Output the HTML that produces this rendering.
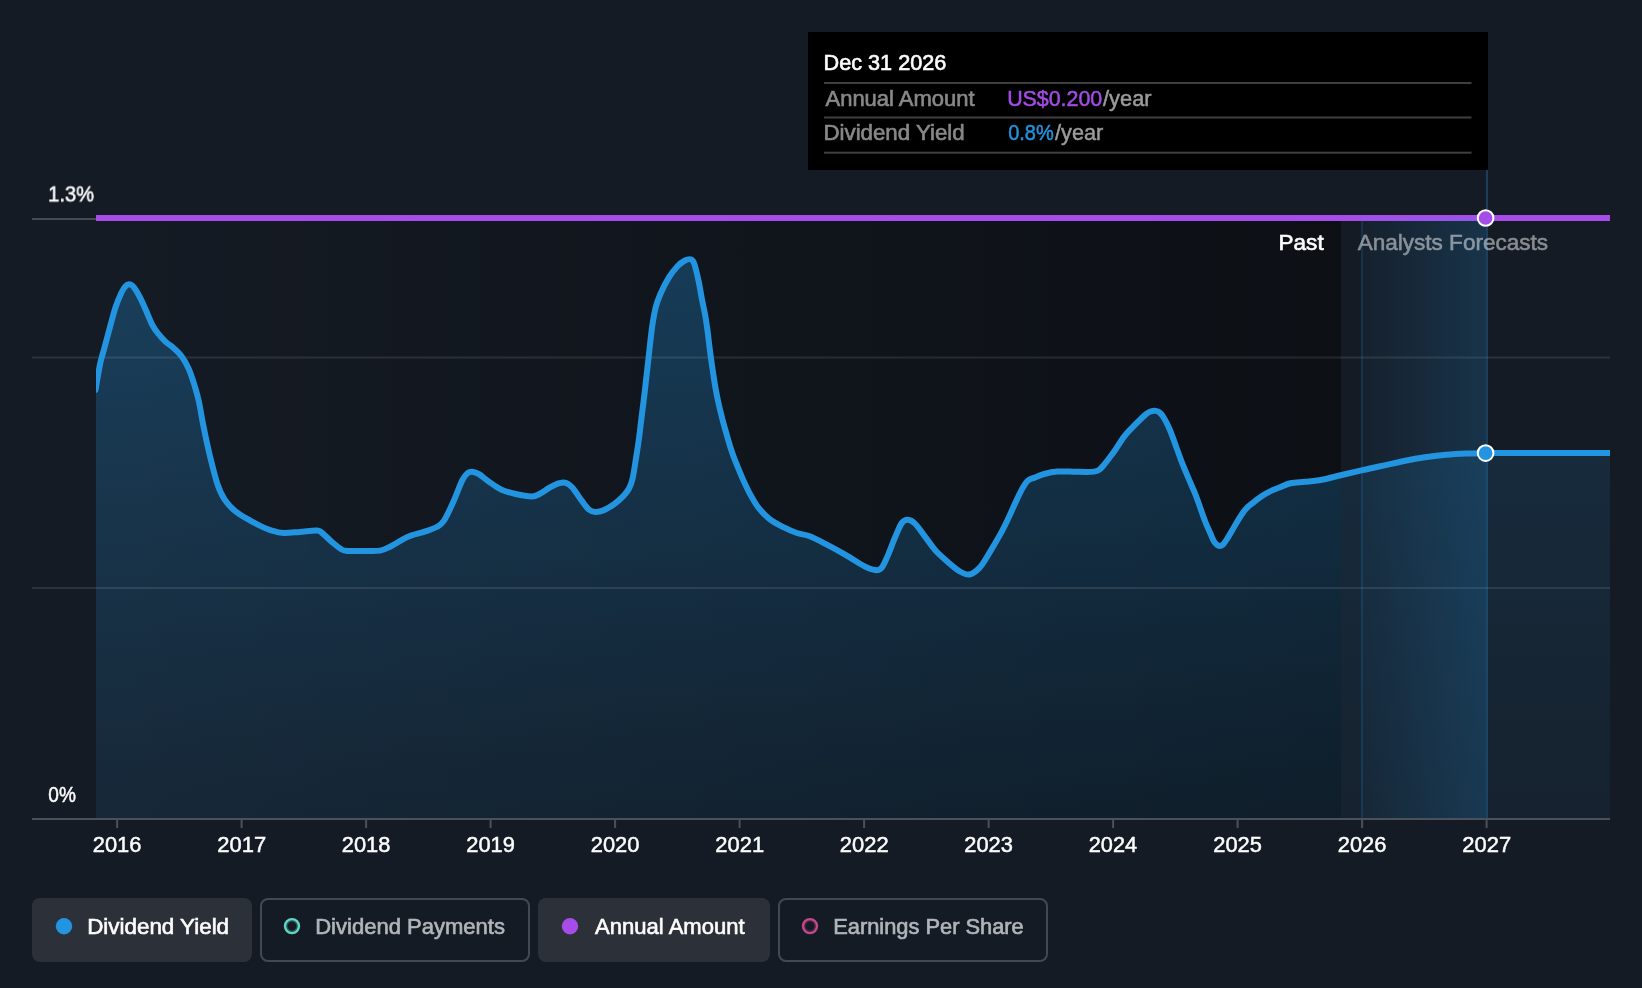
<!DOCTYPE html>
<html lang="en"><head><meta charset="utf-8"><title>Dividend Yield Chart</title>
<style>
html,body{margin:0;padding:0;background:#151b24;}
body{width:1642px;height:988px;overflow:hidden;}
svg{display:block;will-change:transform;}
text{font-family:"Liberation Sans",sans-serif;font-size:22px;stroke-width:0.5px;}
</style></head><body>
<svg width="1642" height="988" viewBox="0 0 1642 988">
<defs>
<linearGradient id="past" x1="0" y1="0" x2="1" y2="0"><stop offset="0" stop-color="#000" stop-opacity="0"/><stop offset="1" stop-color="#000" stop-opacity=".42"/></linearGradient>
<linearGradient id="area" gradientUnits="userSpaceOnUse" x1="0" y1="259" x2="0" y2="818"><stop offset="0" stop-color="#2394df" stop-opacity=".30"/><stop offset="1" stop-color="#2394df" stop-opacity=".10"/></linearGradient>
<linearGradient id="hl" x1="0" y1="0" x2="1" y2="0"><stop offset="0" stop-color="#2394df" stop-opacity=".05"/><stop offset="1" stop-color="#2394df" stop-opacity=".20"/></linearGradient>
<clipPath id="cpast"><rect x="96" y="200" width="1245" height="630"/></clipPath>
<clipPath id="cfc"><rect x="1341" y="200" width="269" height="630"/></clipPath>
<clipPath id="plot"><rect x="96" y="200" width="1514" height="630"/></clipPath>
</defs>
<rect width="1642" height="988" fill="#151b24"/>
<rect x="96" y="218" width="1245" height="600" fill="url(#past)"/>
<g clip-path="url(#cpast)"><path d="M95.5,390.0C96.3,385.6 98.7,370.5 100.2,363.5C101.7,356.5 102.8,354.0 104.4,347.9C106.1,341.8 108.2,333.5 110.1,326.6C112.0,319.8 113.8,312.5 115.7,306.8C117.6,301.1 119.8,296.1 121.4,292.7C123.0,289.3 124.2,287.7 125.5,286.3C126.8,284.9 128.0,284.4 129.2,284.3C130.4,284.2 131.4,284.9 132.5,285.8C133.6,286.7 134.3,287.7 135.6,289.8C136.9,291.9 138.6,294.5 140.5,298.3C142.4,302.1 144.9,308.0 146.9,312.5C148.9,317.0 150.6,321.7 152.5,325.2C154.4,328.7 155.9,330.9 158.2,333.7C160.4,336.5 163.7,340.0 166.0,342.2C168.3,344.4 169.6,344.5 172.2,346.8C174.8,349.1 178.7,352.3 181.4,356.0C184.2,359.7 186.4,363.6 188.7,368.8C191.0,374.0 193.2,381.3 195.0,387.0C196.8,392.7 197.8,396.3 199.2,403.0C200.6,409.7 201.9,418.5 203.7,427.4C205.5,436.3 207.8,447.2 210.1,456.6C212.4,466.0 215.0,476.8 217.4,484.0C219.8,491.2 221.6,495.0 224.7,499.6C227.8,504.2 231.4,508.0 235.7,511.5C240.0,515.0 245.1,517.7 250.3,520.6C255.5,523.5 261.5,526.8 266.7,528.8C271.9,530.8 275.9,532.3 281.4,532.8C286.9,533.3 293.8,532.3 299.6,531.9C305.4,531.5 312.4,530.5 316.1,530.6C319.8,530.7 318.9,530.5 321.6,532.5C324.3,534.5 329.1,539.7 332.5,542.5C335.9,545.3 339.3,548.1 341.7,549.5C344.1,550.9 343.5,550.7 347.1,550.9C350.8,551.1 358.1,550.9 363.6,550.9C369.1,550.9 375.4,551.4 380.0,550.6C384.6,549.8 386.4,548.5 391.0,546.2C395.6,543.9 401.9,539.4 407.4,537.0C412.9,534.6 419.0,533.6 423.9,531.9C428.8,530.2 433.3,528.9 436.7,527.0C440.1,525.1 441.3,524.7 444.0,520.6C446.7,516.5 450.1,509.0 453.1,502.3C456.1,495.6 459.8,485.3 462.2,480.4C464.6,475.5 466.0,474.5 467.7,473.1C469.4,471.7 470.4,471.6 472.3,471.8C474.2,472.0 476.3,472.6 479.0,474.2C481.7,475.8 484.6,478.7 488.3,481.2C492.0,483.7 496.4,487.3 501.0,489.4C505.6,491.5 510.5,492.8 515.7,494.0C520.9,495.2 528.2,496.4 532.1,496.4C536.0,496.4 536.4,495.5 539.4,494.0C542.4,492.5 547.0,489.0 550.4,487.2C553.8,485.4 556.9,483.9 559.5,483.2C562.1,482.5 563.8,482.2 565.9,482.9C568.0,483.6 569.7,484.7 572.3,487.6C574.9,490.5 578.8,496.8 581.5,500.4C584.2,504.0 586.5,507.6 588.8,509.5C591.1,511.4 592.8,511.8 595.2,511.9C597.6,512.0 600.2,511.7 603.4,510.4C606.6,509.1 610.9,506.4 614.3,504.0C617.6,501.6 621.0,498.4 623.5,495.8C626.0,493.2 627.5,491.4 629.0,488.5C630.5,485.6 631.4,483.8 632.6,478.5C633.8,473.2 635.2,463.2 636.3,456.5C637.4,449.8 638.2,444.1 639.0,438.3C639.8,432.6 640.0,429.9 641.0,422.0C642.0,414.1 643.5,401.8 644.8,391.2C646.0,380.6 647.3,369.0 648.5,358.3C649.7,347.6 650.9,335.7 652.1,327.2C653.3,318.7 654.4,312.6 655.8,307.1C657.2,301.6 658.2,299.2 660.3,294.3C662.4,289.4 665.7,282.6 668.6,277.9C671.5,273.2 675.0,268.9 677.7,266.0C680.4,263.1 682.9,261.6 685.0,260.5C687.1,259.4 689.0,258.8 690.5,259.3C692.0,259.8 692.7,259.6 694.1,263.3C695.5,267.0 697.4,275.4 698.7,281.5C700.0,287.6 701.0,294.4 702.1,300.0C703.2,305.6 704.3,310.1 705.2,315.2C706.1,320.3 706.8,325.3 707.5,330.4C708.2,335.4 708.7,340.9 709.3,345.5C709.9,350.1 710.3,353.1 710.9,357.7C711.5,362.3 712.3,367.8 713.1,372.9C713.9,377.9 714.6,382.9 715.5,388.0C716.4,393.1 717.4,398.1 718.5,403.2C719.6,408.3 720.9,413.3 722.2,418.4C723.5,423.5 724.9,428.3 726.4,433.6C727.9,438.9 729.8,445.4 731.3,450.0C732.8,454.6 733.5,456.5 735.3,461.0C737.1,465.5 739.6,471.8 742.0,477.2C744.4,482.6 746.9,488.3 749.7,493.4C752.5,498.5 755.2,503.6 758.6,507.9C762.0,512.2 765.8,516.0 770.0,519.3C774.2,522.5 779.4,525.1 783.9,527.4C788.4,529.7 792.6,531.5 796.9,533.0C801.2,534.5 805.0,534.4 809.8,536.3C814.6,538.1 819.9,541.0 825.9,544.1C831.9,547.2 839.6,551.4 846.0,555.1C852.4,558.8 859.3,563.6 864.2,566.1C869.1,568.6 872.3,569.8 875.2,570.1C878.1,570.4 879.5,570.4 881.6,567.9C883.7,565.4 885.7,560.3 888.0,555.1C890.3,549.9 893.0,542.1 895.3,536.8C897.6,531.5 899.6,525.9 901.7,523.1C903.8,520.3 905.8,519.6 908.1,519.8C910.4,519.9 912.7,521.3 915.4,524.0C918.1,526.7 921.1,531.5 924.5,535.9C927.9,540.3 931.5,546.1 935.5,550.5C939.5,554.9 944.3,558.9 948.3,562.4C952.3,565.9 955.8,569.2 959.3,571.2C962.8,573.2 965.9,575.0 969.3,574.5C972.6,574.0 976.1,571.4 979.4,567.9C982.7,564.4 985.6,559.1 989.1,553.4C992.6,547.7 997.2,539.8 1000.5,533.9C1003.8,528.0 1005.9,523.4 1008.6,517.7C1011.3,512.0 1014.3,505.0 1016.7,499.9C1019.1,494.8 1021.3,490.2 1023.2,487.0C1025.1,483.8 1026.1,482.1 1028.0,480.5C1029.9,478.9 1031.8,478.7 1034.5,477.6C1037.2,476.5 1040.4,475.0 1044.2,474.0C1048.0,473.0 1052.3,472.0 1057.2,471.6C1062.1,471.2 1068.6,471.6 1073.4,471.7C1078.2,471.8 1082.9,472.0 1086.3,472.0C1089.7,472.0 1092.0,471.9 1094.0,471.6C1096.0,471.3 1097.1,471.1 1098.6,470.2C1100.1,469.3 1101.3,468.0 1103.0,466.0C1104.7,464.0 1107.0,461.0 1109.0,458.4C1111.0,455.8 1112.5,453.9 1115.0,450.3C1117.5,446.7 1120.8,440.9 1124.1,436.6C1127.4,432.3 1131.4,428.4 1135.1,424.7C1138.8,421.0 1143.4,416.4 1146.1,414.2C1148.8,412.0 1149.5,411.9 1151.1,411.3C1152.7,410.8 1154.3,410.7 1155.7,410.9C1157.1,411.1 1158.4,411.5 1159.7,412.6C1161.0,413.7 1162.4,415.4 1163.8,417.7C1165.2,420.0 1166.9,423.2 1168.3,426.3C1169.7,429.4 1171.1,432.9 1172.4,436.4C1173.8,439.9 1175.1,443.8 1176.4,447.5C1177.8,451.2 1179.2,455.1 1180.5,458.7C1181.8,462.2 1183.0,465.3 1184.5,468.8C1186.0,472.3 1187.6,476.2 1189.2,479.9C1190.8,483.6 1192.6,487.7 1194.0,491.0C1195.4,494.3 1195.7,494.9 1197.5,499.9C1199.3,504.9 1202.9,515.5 1205.0,521.0C1207.1,526.5 1208.6,529.4 1210.1,532.8C1211.6,536.2 1212.7,539.2 1213.9,541.2C1215.1,543.2 1216.3,544.3 1217.3,545.1C1218.2,545.9 1218.6,546.1 1219.6,546.0C1220.6,545.9 1221.9,545.6 1223.2,544.3C1224.5,543.0 1225.8,540.8 1227.4,538.3C1229.0,535.8 1230.8,532.5 1232.8,529.2C1234.8,525.9 1237.1,521.6 1239.2,518.3C1241.3,515.0 1243.3,511.8 1245.6,509.2C1247.9,506.6 1250.2,505.0 1252.9,502.8C1255.6,500.6 1259.0,498.0 1262.0,496.0C1265.0,494.0 1268.1,492.3 1271.1,490.9C1274.1,489.4 1276.8,488.6 1280.0,487.3C1283.2,486.0 1286.2,484.1 1290.4,483.2C1294.6,482.3 1299.9,482.3 1305.0,481.8C1310.1,481.3 1314.7,481.1 1320.8,480.0C1326.9,478.9 1334.8,476.6 1341.7,475.0C1348.7,473.4 1355.6,471.8 1362.5,470.2C1369.4,468.6 1376.4,467.1 1383.3,465.6C1390.2,464.1 1397.1,462.4 1404.1,461.0C1411.0,459.6 1418.0,458.3 1425.0,457.3C1432.0,456.3 1438.9,455.4 1445.8,454.8C1452.7,454.2 1460.0,453.8 1466.6,453.5C1473.2,453.2 1482.3,453.2 1485.4,453.1L1614,453.1L1614,818L95.5,818Z" fill="url(#area)"/></g>
<g clip-path="url(#cfc)" opacity=".56"><path d="M95.5,390.0C96.3,385.6 98.7,370.5 100.2,363.5C101.7,356.5 102.8,354.0 104.4,347.9C106.1,341.8 108.2,333.5 110.1,326.6C112.0,319.8 113.8,312.5 115.7,306.8C117.6,301.1 119.8,296.1 121.4,292.7C123.0,289.3 124.2,287.7 125.5,286.3C126.8,284.9 128.0,284.4 129.2,284.3C130.4,284.2 131.4,284.9 132.5,285.8C133.6,286.7 134.3,287.7 135.6,289.8C136.9,291.9 138.6,294.5 140.5,298.3C142.4,302.1 144.9,308.0 146.9,312.5C148.9,317.0 150.6,321.7 152.5,325.2C154.4,328.7 155.9,330.9 158.2,333.7C160.4,336.5 163.7,340.0 166.0,342.2C168.3,344.4 169.6,344.5 172.2,346.8C174.8,349.1 178.7,352.3 181.4,356.0C184.2,359.7 186.4,363.6 188.7,368.8C191.0,374.0 193.2,381.3 195.0,387.0C196.8,392.7 197.8,396.3 199.2,403.0C200.6,409.7 201.9,418.5 203.7,427.4C205.5,436.3 207.8,447.2 210.1,456.6C212.4,466.0 215.0,476.8 217.4,484.0C219.8,491.2 221.6,495.0 224.7,499.6C227.8,504.2 231.4,508.0 235.7,511.5C240.0,515.0 245.1,517.7 250.3,520.6C255.5,523.5 261.5,526.8 266.7,528.8C271.9,530.8 275.9,532.3 281.4,532.8C286.9,533.3 293.8,532.3 299.6,531.9C305.4,531.5 312.4,530.5 316.1,530.6C319.8,530.7 318.9,530.5 321.6,532.5C324.3,534.5 329.1,539.7 332.5,542.5C335.9,545.3 339.3,548.1 341.7,549.5C344.1,550.9 343.5,550.7 347.1,550.9C350.8,551.1 358.1,550.9 363.6,550.9C369.1,550.9 375.4,551.4 380.0,550.6C384.6,549.8 386.4,548.5 391.0,546.2C395.6,543.9 401.9,539.4 407.4,537.0C412.9,534.6 419.0,533.6 423.9,531.9C428.8,530.2 433.3,528.9 436.7,527.0C440.1,525.1 441.3,524.7 444.0,520.6C446.7,516.5 450.1,509.0 453.1,502.3C456.1,495.6 459.8,485.3 462.2,480.4C464.6,475.5 466.0,474.5 467.7,473.1C469.4,471.7 470.4,471.6 472.3,471.8C474.2,472.0 476.3,472.6 479.0,474.2C481.7,475.8 484.6,478.7 488.3,481.2C492.0,483.7 496.4,487.3 501.0,489.4C505.6,491.5 510.5,492.8 515.7,494.0C520.9,495.2 528.2,496.4 532.1,496.4C536.0,496.4 536.4,495.5 539.4,494.0C542.4,492.5 547.0,489.0 550.4,487.2C553.8,485.4 556.9,483.9 559.5,483.2C562.1,482.5 563.8,482.2 565.9,482.9C568.0,483.6 569.7,484.7 572.3,487.6C574.9,490.5 578.8,496.8 581.5,500.4C584.2,504.0 586.5,507.6 588.8,509.5C591.1,511.4 592.8,511.8 595.2,511.9C597.6,512.0 600.2,511.7 603.4,510.4C606.6,509.1 610.9,506.4 614.3,504.0C617.6,501.6 621.0,498.4 623.5,495.8C626.0,493.2 627.5,491.4 629.0,488.5C630.5,485.6 631.4,483.8 632.6,478.5C633.8,473.2 635.2,463.2 636.3,456.5C637.4,449.8 638.2,444.1 639.0,438.3C639.8,432.6 640.0,429.9 641.0,422.0C642.0,414.1 643.5,401.8 644.8,391.2C646.0,380.6 647.3,369.0 648.5,358.3C649.7,347.6 650.9,335.7 652.1,327.2C653.3,318.7 654.4,312.6 655.8,307.1C657.2,301.6 658.2,299.2 660.3,294.3C662.4,289.4 665.7,282.6 668.6,277.9C671.5,273.2 675.0,268.9 677.7,266.0C680.4,263.1 682.9,261.6 685.0,260.5C687.1,259.4 689.0,258.8 690.5,259.3C692.0,259.8 692.7,259.6 694.1,263.3C695.5,267.0 697.4,275.4 698.7,281.5C700.0,287.6 701.0,294.4 702.1,300.0C703.2,305.6 704.3,310.1 705.2,315.2C706.1,320.3 706.8,325.3 707.5,330.4C708.2,335.4 708.7,340.9 709.3,345.5C709.9,350.1 710.3,353.1 710.9,357.7C711.5,362.3 712.3,367.8 713.1,372.9C713.9,377.9 714.6,382.9 715.5,388.0C716.4,393.1 717.4,398.1 718.5,403.2C719.6,408.3 720.9,413.3 722.2,418.4C723.5,423.5 724.9,428.3 726.4,433.6C727.9,438.9 729.8,445.4 731.3,450.0C732.8,454.6 733.5,456.5 735.3,461.0C737.1,465.5 739.6,471.8 742.0,477.2C744.4,482.6 746.9,488.3 749.7,493.4C752.5,498.5 755.2,503.6 758.6,507.9C762.0,512.2 765.8,516.0 770.0,519.3C774.2,522.5 779.4,525.1 783.9,527.4C788.4,529.7 792.6,531.5 796.9,533.0C801.2,534.5 805.0,534.4 809.8,536.3C814.6,538.1 819.9,541.0 825.9,544.1C831.9,547.2 839.6,551.4 846.0,555.1C852.4,558.8 859.3,563.6 864.2,566.1C869.1,568.6 872.3,569.8 875.2,570.1C878.1,570.4 879.5,570.4 881.6,567.9C883.7,565.4 885.7,560.3 888.0,555.1C890.3,549.9 893.0,542.1 895.3,536.8C897.6,531.5 899.6,525.9 901.7,523.1C903.8,520.3 905.8,519.6 908.1,519.8C910.4,519.9 912.7,521.3 915.4,524.0C918.1,526.7 921.1,531.5 924.5,535.9C927.9,540.3 931.5,546.1 935.5,550.5C939.5,554.9 944.3,558.9 948.3,562.4C952.3,565.9 955.8,569.2 959.3,571.2C962.8,573.2 965.9,575.0 969.3,574.5C972.6,574.0 976.1,571.4 979.4,567.9C982.7,564.4 985.6,559.1 989.1,553.4C992.6,547.7 997.2,539.8 1000.5,533.9C1003.8,528.0 1005.9,523.4 1008.6,517.7C1011.3,512.0 1014.3,505.0 1016.7,499.9C1019.1,494.8 1021.3,490.2 1023.2,487.0C1025.1,483.8 1026.1,482.1 1028.0,480.5C1029.9,478.9 1031.8,478.7 1034.5,477.6C1037.2,476.5 1040.4,475.0 1044.2,474.0C1048.0,473.0 1052.3,472.0 1057.2,471.6C1062.1,471.2 1068.6,471.6 1073.4,471.7C1078.2,471.8 1082.9,472.0 1086.3,472.0C1089.7,472.0 1092.0,471.9 1094.0,471.6C1096.0,471.3 1097.1,471.1 1098.6,470.2C1100.1,469.3 1101.3,468.0 1103.0,466.0C1104.7,464.0 1107.0,461.0 1109.0,458.4C1111.0,455.8 1112.5,453.9 1115.0,450.3C1117.5,446.7 1120.8,440.9 1124.1,436.6C1127.4,432.3 1131.4,428.4 1135.1,424.7C1138.8,421.0 1143.4,416.4 1146.1,414.2C1148.8,412.0 1149.5,411.9 1151.1,411.3C1152.7,410.8 1154.3,410.7 1155.7,410.9C1157.1,411.1 1158.4,411.5 1159.7,412.6C1161.0,413.7 1162.4,415.4 1163.8,417.7C1165.2,420.0 1166.9,423.2 1168.3,426.3C1169.7,429.4 1171.1,432.9 1172.4,436.4C1173.8,439.9 1175.1,443.8 1176.4,447.5C1177.8,451.2 1179.2,455.1 1180.5,458.7C1181.8,462.2 1183.0,465.3 1184.5,468.8C1186.0,472.3 1187.6,476.2 1189.2,479.9C1190.8,483.6 1192.6,487.7 1194.0,491.0C1195.4,494.3 1195.7,494.9 1197.5,499.9C1199.3,504.9 1202.9,515.5 1205.0,521.0C1207.1,526.5 1208.6,529.4 1210.1,532.8C1211.6,536.2 1212.7,539.2 1213.9,541.2C1215.1,543.2 1216.3,544.3 1217.3,545.1C1218.2,545.9 1218.6,546.1 1219.6,546.0C1220.6,545.9 1221.9,545.6 1223.2,544.3C1224.5,543.0 1225.8,540.8 1227.4,538.3C1229.0,535.8 1230.8,532.5 1232.8,529.2C1234.8,525.9 1237.1,521.6 1239.2,518.3C1241.3,515.0 1243.3,511.8 1245.6,509.2C1247.9,506.6 1250.2,505.0 1252.9,502.8C1255.6,500.6 1259.0,498.0 1262.0,496.0C1265.0,494.0 1268.1,492.3 1271.1,490.9C1274.1,489.4 1276.8,488.6 1280.0,487.3C1283.2,486.0 1286.2,484.1 1290.4,483.2C1294.6,482.3 1299.9,482.3 1305.0,481.8C1310.1,481.3 1314.7,481.1 1320.8,480.0C1326.9,478.9 1334.8,476.6 1341.7,475.0C1348.7,473.4 1355.6,471.8 1362.5,470.2C1369.4,468.6 1376.4,467.1 1383.3,465.6C1390.2,464.1 1397.1,462.4 1404.1,461.0C1411.0,459.6 1418.0,458.3 1425.0,457.3C1432.0,456.3 1438.9,455.4 1445.8,454.8C1452.7,454.2 1460.0,453.8 1466.6,453.5C1473.2,453.2 1482.3,453.2 1485.4,453.1L1614,453.1L1614,818L95.5,818Z" fill="url(#area)"/></g>
<g fill="#fff"><rect x="32" y="218" width="70" height="2" fill-opacity=".21"/><rect x="32" y="356.5" width="1578" height="2" fill-opacity=".1"/><rect x="32" y="587" width="1578" height="2" fill-opacity=".1"/></g>
<g clip-path="url(#plot)">
<path d="M95.5,390.0C96.3,385.6 98.7,370.5 100.2,363.5C101.7,356.5 102.8,354.0 104.4,347.9C106.1,341.8 108.2,333.5 110.1,326.6C112.0,319.8 113.8,312.5 115.7,306.8C117.6,301.1 119.8,296.1 121.4,292.7C123.0,289.3 124.2,287.7 125.5,286.3C126.8,284.9 128.0,284.4 129.2,284.3C130.4,284.2 131.4,284.9 132.5,285.8C133.6,286.7 134.3,287.7 135.6,289.8C136.9,291.9 138.6,294.5 140.5,298.3C142.4,302.1 144.9,308.0 146.9,312.5C148.9,317.0 150.6,321.7 152.5,325.2C154.4,328.7 155.9,330.9 158.2,333.7C160.4,336.5 163.7,340.0 166.0,342.2C168.3,344.4 169.6,344.5 172.2,346.8C174.8,349.1 178.7,352.3 181.4,356.0C184.2,359.7 186.4,363.6 188.7,368.8C191.0,374.0 193.2,381.3 195.0,387.0C196.8,392.7 197.8,396.3 199.2,403.0C200.6,409.7 201.9,418.5 203.7,427.4C205.5,436.3 207.8,447.2 210.1,456.6C212.4,466.0 215.0,476.8 217.4,484.0C219.8,491.2 221.6,495.0 224.7,499.6C227.8,504.2 231.4,508.0 235.7,511.5C240.0,515.0 245.1,517.7 250.3,520.6C255.5,523.5 261.5,526.8 266.7,528.8C271.9,530.8 275.9,532.3 281.4,532.8C286.9,533.3 293.8,532.3 299.6,531.9C305.4,531.5 312.4,530.5 316.1,530.6C319.8,530.7 318.9,530.5 321.6,532.5C324.3,534.5 329.1,539.7 332.5,542.5C335.9,545.3 339.3,548.1 341.7,549.5C344.1,550.9 343.5,550.7 347.1,550.9C350.8,551.1 358.1,550.9 363.6,550.9C369.1,550.9 375.4,551.4 380.0,550.6C384.6,549.8 386.4,548.5 391.0,546.2C395.6,543.9 401.9,539.4 407.4,537.0C412.9,534.6 419.0,533.6 423.9,531.9C428.8,530.2 433.3,528.9 436.7,527.0C440.1,525.1 441.3,524.7 444.0,520.6C446.7,516.5 450.1,509.0 453.1,502.3C456.1,495.6 459.8,485.3 462.2,480.4C464.6,475.5 466.0,474.5 467.7,473.1C469.4,471.7 470.4,471.6 472.3,471.8C474.2,472.0 476.3,472.6 479.0,474.2C481.7,475.8 484.6,478.7 488.3,481.2C492.0,483.7 496.4,487.3 501.0,489.4C505.6,491.5 510.5,492.8 515.7,494.0C520.9,495.2 528.2,496.4 532.1,496.4C536.0,496.4 536.4,495.5 539.4,494.0C542.4,492.5 547.0,489.0 550.4,487.2C553.8,485.4 556.9,483.9 559.5,483.2C562.1,482.5 563.8,482.2 565.9,482.9C568.0,483.6 569.7,484.7 572.3,487.6C574.9,490.5 578.8,496.8 581.5,500.4C584.2,504.0 586.5,507.6 588.8,509.5C591.1,511.4 592.8,511.8 595.2,511.9C597.6,512.0 600.2,511.7 603.4,510.4C606.6,509.1 610.9,506.4 614.3,504.0C617.6,501.6 621.0,498.4 623.5,495.8C626.0,493.2 627.5,491.4 629.0,488.5C630.5,485.6 631.4,483.8 632.6,478.5C633.8,473.2 635.2,463.2 636.3,456.5C637.4,449.8 638.2,444.1 639.0,438.3C639.8,432.6 640.0,429.9 641.0,422.0C642.0,414.1 643.5,401.8 644.8,391.2C646.0,380.6 647.3,369.0 648.5,358.3C649.7,347.6 650.9,335.7 652.1,327.2C653.3,318.7 654.4,312.6 655.8,307.1C657.2,301.6 658.2,299.2 660.3,294.3C662.4,289.4 665.7,282.6 668.6,277.9C671.5,273.2 675.0,268.9 677.7,266.0C680.4,263.1 682.9,261.6 685.0,260.5C687.1,259.4 689.0,258.8 690.5,259.3C692.0,259.8 692.7,259.6 694.1,263.3C695.5,267.0 697.4,275.4 698.7,281.5C700.0,287.6 701.0,294.4 702.1,300.0C703.2,305.6 704.3,310.1 705.2,315.2C706.1,320.3 706.8,325.3 707.5,330.4C708.2,335.4 708.7,340.9 709.3,345.5C709.9,350.1 710.3,353.1 710.9,357.7C711.5,362.3 712.3,367.8 713.1,372.9C713.9,377.9 714.6,382.9 715.5,388.0C716.4,393.1 717.4,398.1 718.5,403.2C719.6,408.3 720.9,413.3 722.2,418.4C723.5,423.5 724.9,428.3 726.4,433.6C727.9,438.9 729.8,445.4 731.3,450.0C732.8,454.6 733.5,456.5 735.3,461.0C737.1,465.5 739.6,471.8 742.0,477.2C744.4,482.6 746.9,488.3 749.7,493.4C752.5,498.5 755.2,503.6 758.6,507.9C762.0,512.2 765.8,516.0 770.0,519.3C774.2,522.5 779.4,525.1 783.9,527.4C788.4,529.7 792.6,531.5 796.9,533.0C801.2,534.5 805.0,534.4 809.8,536.3C814.6,538.1 819.9,541.0 825.9,544.1C831.9,547.2 839.6,551.4 846.0,555.1C852.4,558.8 859.3,563.6 864.2,566.1C869.1,568.6 872.3,569.8 875.2,570.1C878.1,570.4 879.5,570.4 881.6,567.9C883.7,565.4 885.7,560.3 888.0,555.1C890.3,549.9 893.0,542.1 895.3,536.8C897.6,531.5 899.6,525.9 901.7,523.1C903.8,520.3 905.8,519.6 908.1,519.8C910.4,519.9 912.7,521.3 915.4,524.0C918.1,526.7 921.1,531.5 924.5,535.9C927.9,540.3 931.5,546.1 935.5,550.5C939.5,554.9 944.3,558.9 948.3,562.4C952.3,565.9 955.8,569.2 959.3,571.2C962.8,573.2 965.9,575.0 969.3,574.5C972.6,574.0 976.1,571.4 979.4,567.9C982.7,564.4 985.6,559.1 989.1,553.4C992.6,547.7 997.2,539.8 1000.5,533.9C1003.8,528.0 1005.9,523.4 1008.6,517.7C1011.3,512.0 1014.3,505.0 1016.7,499.9C1019.1,494.8 1021.3,490.2 1023.2,487.0C1025.1,483.8 1026.1,482.1 1028.0,480.5C1029.9,478.9 1031.8,478.7 1034.5,477.6C1037.2,476.5 1040.4,475.0 1044.2,474.0C1048.0,473.0 1052.3,472.0 1057.2,471.6C1062.1,471.2 1068.6,471.6 1073.4,471.7C1078.2,471.8 1082.9,472.0 1086.3,472.0C1089.7,472.0 1092.0,471.9 1094.0,471.6C1096.0,471.3 1097.1,471.1 1098.6,470.2C1100.1,469.3 1101.3,468.0 1103.0,466.0C1104.7,464.0 1107.0,461.0 1109.0,458.4C1111.0,455.8 1112.5,453.9 1115.0,450.3C1117.5,446.7 1120.8,440.9 1124.1,436.6C1127.4,432.3 1131.4,428.4 1135.1,424.7C1138.8,421.0 1143.4,416.4 1146.1,414.2C1148.8,412.0 1149.5,411.9 1151.1,411.3C1152.7,410.8 1154.3,410.7 1155.7,410.9C1157.1,411.1 1158.4,411.5 1159.7,412.6C1161.0,413.7 1162.4,415.4 1163.8,417.7C1165.2,420.0 1166.9,423.2 1168.3,426.3C1169.7,429.4 1171.1,432.9 1172.4,436.4C1173.8,439.9 1175.1,443.8 1176.4,447.5C1177.8,451.2 1179.2,455.1 1180.5,458.7C1181.8,462.2 1183.0,465.3 1184.5,468.8C1186.0,472.3 1187.6,476.2 1189.2,479.9C1190.8,483.6 1192.6,487.7 1194.0,491.0C1195.4,494.3 1195.7,494.9 1197.5,499.9C1199.3,504.9 1202.9,515.5 1205.0,521.0C1207.1,526.5 1208.6,529.4 1210.1,532.8C1211.6,536.2 1212.7,539.2 1213.9,541.2C1215.1,543.2 1216.3,544.3 1217.3,545.1C1218.2,545.9 1218.6,546.1 1219.6,546.0C1220.6,545.9 1221.9,545.6 1223.2,544.3C1224.5,543.0 1225.8,540.8 1227.4,538.3C1229.0,535.8 1230.8,532.5 1232.8,529.2C1234.8,525.9 1237.1,521.6 1239.2,518.3C1241.3,515.0 1243.3,511.8 1245.6,509.2C1247.9,506.6 1250.2,505.0 1252.9,502.8C1255.6,500.6 1259.0,498.0 1262.0,496.0C1265.0,494.0 1268.1,492.3 1271.1,490.9C1274.1,489.4 1276.8,488.6 1280.0,487.3C1283.2,486.0 1286.2,484.1 1290.4,483.2C1294.6,482.3 1299.9,482.3 1305.0,481.8C1310.1,481.3 1314.7,481.1 1320.8,480.0C1326.9,478.9 1334.8,476.6 1341.7,475.0C1348.7,473.4 1355.6,471.8 1362.5,470.2C1369.4,468.6 1376.4,467.1 1383.3,465.6C1390.2,464.1 1397.1,462.4 1404.1,461.0C1411.0,459.6 1418.0,458.3 1425.0,457.3C1432.0,456.3 1438.9,455.4 1445.8,454.8C1452.7,454.2 1460.0,453.8 1466.6,453.5C1473.2,453.2 1482.3,453.2 1485.4,453.1L1614,453.1" fill="none" stroke="#2394df" stroke-width="6" stroke-linejoin="round" stroke-linecap="round"/>
</g>
<line x1="96" y1="218" x2="1610" y2="218" stroke="#a64de9" stroke-width="6"/>
<rect x="1363" y="218" width="123" height="600" fill="url(#hl)"/>
<rect x="1361" y="218" width="2" height="600" fill="#2394df" fill-opacity=".2"/><rect x="1486" y="170" width="2" height="648" fill="#2394df" fill-opacity=".3"/>
<g fill="#4b515b"><rect x="32" y="818" width="1578" height="2"/><rect x="116.1" y="819" width="2" height="9"/><rect x="240.6" y="819" width="2" height="9"/><rect x="365.1" y="819" width="2" height="9"/><rect x="489.6" y="819" width="2" height="9"/><rect x="614.1" y="819" width="2" height="9"/><rect x="738.6" y="819" width="2" height="9"/><rect x="863.1" y="819" width="2" height="9"/><rect x="987.6" y="819" width="2" height="9"/><rect x="1112.1" y="819" width="2" height="9"/><rect x="1236.6" y="819" width="2" height="9"/><rect x="1361.1" y="819" width="2" height="9"/><rect x="1485.6" y="819" width="2" height="9"/></g>
<circle cx="1485.6" cy="218" r="7.85" fill="#a64de9" stroke="#fff" stroke-width="2"/>
<circle cx="1485.6" cy="453.1" r="7.85" fill="#2394df" stroke="#fff" stroke-width="2"/>
<!-- tooltip -->
<rect x="808" y="32" width="680" height="138" fill="#000"/>
<g fill="#3f3f3f"><rect x="824" y="82" width="647.5" height="2"/><rect x="824" y="116.5" width="647.5" height="2"/><rect x="824" y="151.7" width="647.5" height="2"/></g>
<!-- legend -->
<rect x="32" y="898" width="220" height="64" rx="8" fill="#2c3039"/>
<circle cx="64" cy="926.2" r="8.2" fill="#2394df"/>
<rect x="261" y="899" width="268" height="62" rx="7" fill="none" stroke="#434953" stroke-width="2"/>
<circle cx="292" cy="926.1" r="7" fill="none" stroke="#62d6c6" stroke-width="2.4"/><circle cx="292" cy="926.1" r="5.2" fill="none" stroke="#62d6c6" stroke-opacity=".3" stroke-width="1.6"/>
<rect x="538" y="898" width="232" height="64" rx="8" fill="#2c3039"/>
<circle cx="570" cy="926.2" r="8.2" fill="#a64de9"/>
<rect x="779" y="899" width="268" height="62" rx="7" fill="none" stroke="#434953" stroke-width="2"/>
<circle cx="810" cy="926.1" r="7" fill="none" stroke="#c3478d" stroke-width="2.4"/><circle cx="810" cy="926.1" r="5.2" fill="none" stroke="#c3478d" stroke-opacity=".3" stroke-width="1.6"/>
<g opacity=".99">
<text transform="translate(48.12,201.4) scale(0.9187,1)" fill="#fff" stroke="#fff">1.3%</text>
<text transform="translate(48.27,801.6) scale(0.8683,1)" fill="#fff" stroke="#fff">0%</text>
<text transform="translate(1278.56,249.5) scale(1.0246,1)" fill="#fff" stroke="#fff" style="stroke-width:.65px">Past</text>
<text transform="translate(1357.66,249.5) scale(1.0253,1)" fill="#fff" stroke="#fff" opacity=".5">Analysts Forecasts</text>
<text transform="translate(823.52,69.6) scale(0.9853,1)" fill="#fff" stroke="#fff" style="stroke-width:.65px">Dec 31 2026</text>
<text transform="translate(825.50,105.8) scale(0.9993,1)" fill="#8a8a8a" stroke="#8a8a8a" style="stroke-width:.65px">Annual Amount</text>
<text transform="translate(1007.14,105.8) scale(0.9723,1)" fill="#a64de9" stroke="#a64de9">US$0.200</text>
<text transform="translate(1103.05,105.8) scale(0.9918,1)" fill="#9d9d9d" stroke="#9d9d9d">/year</text>
<text transform="translate(823.48,139.9) scale(1.0135,1)" fill="#8a8a8a" stroke="#8a8a8a" style="stroke-width:.65px">Dividend Yield</text>
<text transform="translate(1008.14,139.9) scale(0.9122,1)" fill="#2394df" stroke="#2394df">0.8%</text>
<text transform="translate(1055.05,139.9) scale(0.9878,1)" fill="#9d9d9d" stroke="#9d9d9d">/year</text>
<text transform="translate(87.17,934) scale(1.0186,1)" fill="#fff" stroke="#fff" style="stroke-width:.65px">Dividend Yield</text>
<text transform="translate(315.20,934) scale(1.0016,1)" fill="#b4b7bc" stroke="#b4b7bc" style="stroke-width:.65px">Dividend Payments</text>
<text transform="translate(595.10,934) scale(1.0027,1)" fill="#fff" stroke="#fff" style="stroke-width:.65px">Annual Amount</text>
<text transform="translate(833.21,934) scale(0.9934,1)" fill="#b4b7bc" stroke="#b4b7bc" style="stroke-width:.65px">Earnings Per Share</text>
<text transform="translate(92.75,851.6) scale(0.9937,1)" fill="#fff" stroke="#fff">2016</text>
<text transform="translate(217.25,851.6) scale(0.9989,1)" fill="#fff" stroke="#fff">2017</text>
<text transform="translate(341.75,851.6) scale(0.9937,1)" fill="#fff" stroke="#fff">2018</text>
<text transform="translate(466.25,851.6) scale(0.9937,1)" fill="#fff" stroke="#fff">2019</text>
<text transform="translate(590.75,851.6) scale(0.9937,1)" fill="#fff" stroke="#fff">2020</text>
<text transform="translate(715.25,851.6) scale(0.9989,1)" fill="#fff" stroke="#fff">2021</text>
<text transform="translate(839.75,851.6) scale(0.9989,1)" fill="#fff" stroke="#fff">2022</text>
<text transform="translate(964.25,851.6) scale(0.9937,1)" fill="#fff" stroke="#fff">2023</text>
<text transform="translate(1088.76,851.6) scale(0.9885,1)" fill="#fff" stroke="#fff">2024</text>
<text transform="translate(1213.25,851.6) scale(0.9937,1)" fill="#fff" stroke="#fff">2025</text>
<text transform="translate(1337.75,851.6) scale(0.9937,1)" fill="#fff" stroke="#fff">2026</text>
<text transform="translate(1462.25,851.6) scale(0.9989,1)" fill="#fff" stroke="#fff">2027</text>
</g>
</svg>
</body></html>
